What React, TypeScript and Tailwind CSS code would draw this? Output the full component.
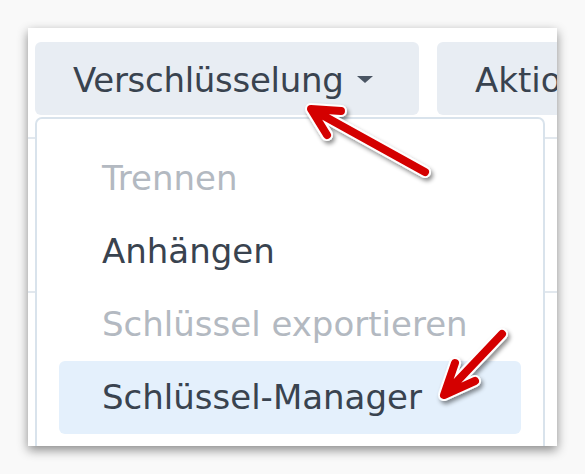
export default function App() {
  const font = { fontFamily: '"DejaVu Sans", Verdana, sans-serif' };

  return (
    <div className="relative w-[585px] h-[474px] overflow-hidden bg-[#f9f9f9] pt-[28px] pl-[28px]" style={font}>
      <div className="relative w-[529px] h-[418px] overflow-hidden bg-white shadow-[0_4px_10px_rgba(0,0,0,0.45)]">
        {/* toolbar */}
        <div className="flex gap-[18px] pl-[7px] pt-[14px] pb-[22px] border-b-2 border-[#e2e8ee]">
          <div className="flex items-center shrink-0 w-[384px] h-[73px] pl-[38px] pt-[3px] rounded-[6px] bg-[#e8edf3] text-[34px] text-[#39434f]">
            <span className="tracking-[-0.3px]">Verschlüsselung</span>
            <span className="ml-[14px] mb-[2px] w-0 h-0 border-l-[8px] border-r-[8px] border-t-[7px] border-l-transparent border-r-transparent border-t-[#4a5563]"></span>
          </div>
          <div className="flex items-center shrink-0 w-[220px] h-[73px] pl-[38px] pt-[3px] rounded-[6px] bg-[#e8edf3] text-[34px] text-[#39434f]">
            Aktionen
          </div>
        </div>
        <div className="h-[154px] border-b-2 border-[#e2e8ee]"></div>

        {/* dropdown menu */}
        <div className="absolute left-[7px] top-[89px] w-[510px] h-[400px] rounded-t-[7px] border-2 border-[#d9e3ec] bg-white px-[22px] pt-[23px] text-[34px]">
          <div className="h-[73px] leading-[73px] pl-[43px] text-[#b3b9c1]">Trennen</div>
          <div className="h-[73px] leading-[73px] pl-[43px] text-[#39434f]">Anhängen</div>
          <div className="h-[73px] leading-[73px] pl-[43px] text-[#b3b9c1]">Schlüssel exportieren</div>
          <div className="h-[73px] leading-[73px] pl-[43px] rounded-[6px] bg-[#e4f0fc] text-[#39434f]">Schlüssel-Manager</div>
        </div>
      </div>

      {/* annotation arrows */}
      <svg className="absolute inset-0 pointer-events-none" width="585" height="474" viewBox="0 0 585 474">
        <defs>
          <filter id="sh" x="-20%" y="-20%" width="140%" height="140%">
            <feDropShadow dx="2" dy="3" stdDeviation="2" floodColor="#000" floodOpacity="0.45" />
          </filter>
        </defs>
        <g filter="url(#sh)" fill="none" strokeLinecap="round" strokeLinejoin="round">
          <path d="M425 172 L313 110 M341 111 L311 109 L327 135" stroke="#fff" strokeWidth="12" />
          <path d="M425 172 L313 110 M341 111 L311 109 L327 135" stroke="#d40000" strokeWidth="8" />
          <path d="M502 334 L446 393 M455 363 L444 395 L475 381" stroke="#fff" strokeWidth="12" />
          <path d="M502 334 L446 393 M455 363 L444 395 L475 381" stroke="#d40000" strokeWidth="8" />
        </g>
      </svg>
    </div>
  );
}
